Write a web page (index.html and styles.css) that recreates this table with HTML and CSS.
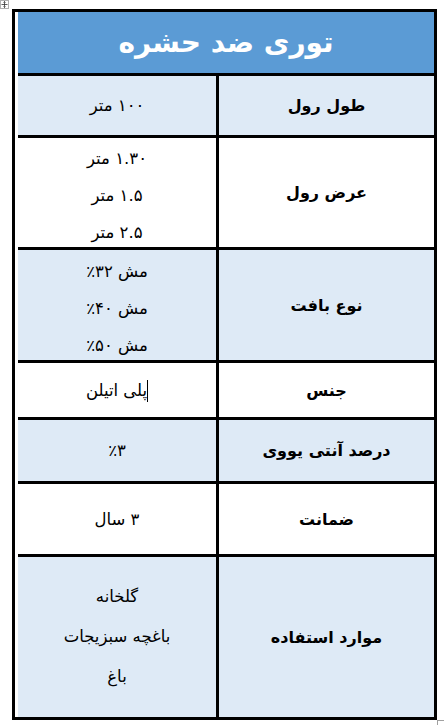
FILE: index.html
```html
<!DOCTYPE html>
<html lang="fa">
<head>
<meta charset="utf-8">
<title>توری ضد حشره</title>
<link rel="stylesheet" href="styles.css">
</head>
<body>
<div class="move-handle">
  <svg width="9" height="9" viewBox="0 0 9 9">
    <rect x="0.5" y="0.5" width="8" height="8" fill="#fff" stroke="#b0b0b0"/>
    <path d="M4.5 1.5v6M1.5 4.5h6M3.5 2.5l1-1 1 1M3.5 6.5l1 1 1-1" fill="none" stroke="#333" stroke-width="0.8"/>
  </svg>
</div>
<div class="spec" dir="rtl">
  <div class="title">توری ضد حشره</div>

  <div class="label band h1">طول رول</div>
  <div class="value band h1">۱۰۰ متر</div>

  <div class="label h2">عرض رول</div>
  <div class="value h2 lines"><span>۱.۳۰ متر</span><span>۱.۵ متر</span><span>۲.۵ متر</span></div>

  <div class="label band h3">نوع بافت</div>
  <div class="value band h3 lines"><span>مش ۳۲٪</span><span>مش ۴۰٪</span><span>مش ۵۰٪</span></div>

  <div class="label h4">جنس</div>
  <div class="value h4"><span><i class="caret"></i>پلی اتیلن</span></div>

  <div class="label band h5">درصد آنتی یووی</div>
  <div class="value band h5">٪۳</div>

  <div class="label h6">ضمانت</div>
  <div class="value h6">۳ سال</div>

  <div class="label band h7 last">موارد استفاده</div>
  <div class="value band h7 last wide"><span>گلخانه</span><span>باغچه سبزیجات</span><span>باغ</span></div>
</div>
<div class="resize-handle"></div>
</body>
</html>
```
FILE: styles.css
```css
html, body {
  margin: 0;
  padding: 0;
  background: #ffffff;
}
body {
  position: relative;
  width: 448px;
  height: 725px;
  overflow: hidden;
  font-family: "DejaVu Sans", "Noto Sans", sans-serif;
  color: #000;
}
.move-handle {
  position: absolute;
  left: 0;
  top: 0;
  width: 9px;
  height: 9px;
  line-height: 0;
}
.resize-handle {
  position: absolute;
  left: 437px;
  top: 720px;
  width: 6px;
  height: 6px;
  border-top: 1px solid #a0a0a0;
  border-left: 1px solid #a0a0a0;
  background: #fff;
}
.spec {
  margin: 9px 0 0 12px;
  width: 419px;
  border: 3px solid #000;
  display: grid;
  grid-template-columns: 218px 198px;
}
.title {
  grid-column: 1 / span 2;
  height: 61px;
  background: #5b9bd5;
  color: #fff;
  border-bottom: 3px solid #000;
  display: flex;
  align-items: center;
  justify-content: center;
  font-size: 28px;
  font-weight: bold;
}
.label, .value {
  display: flex;
  flex-direction: column;
  align-items: center;
  justify-content: center;
  border-bottom: 3px solid #000;
  background: #fff;
}
.label {
  border-left: 3px solid #000;
  font-weight: bold;
  font-size: 16px;
}
.value {
  font-size: 16.5px;
  line-height: 37px;
}
.band { background: #deeaf6; }
.last { border-bottom: 0; }
.h1 { height: 59px; }
.h2 { height: 109px; }
.h3 { height: 110px; }
.h4 { height: 54px; }
.h5 { height: 61px; }
.h6 { height: 70px; }
.h7 { height: 160px; }
.lines.h2 { height: 103px; padding-top: 6px; }
.lines.h3 { height: 104px; padding-top: 6px; }
.wide { line-height: 40px; }
.caret {
  display: inline-block;
  width: 0;
  height: 22px;
  border-left: 1px solid #000;
  vertical-align: middle;
}
```
